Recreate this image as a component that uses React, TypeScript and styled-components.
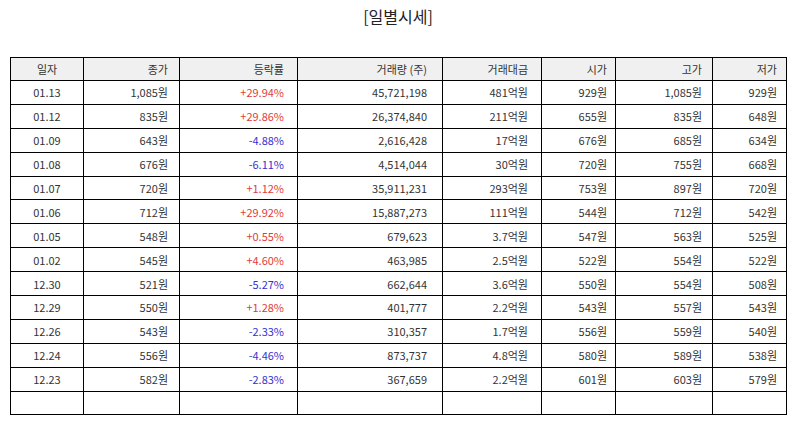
import React from 'react';
import styled, { createGlobalStyle } from 'styled-components';

const GlobalStyle = createGlobalStyle`
  html, body {
    margin: 0;
    padding: 0;
    background: #ffffff;
  }
  body {
    font-family: 'Noto Sans CJK KR', 'Noto Sans', sans-serif;
    color: #333333;
  }
`;

const Page = styled.div`
  width: 794px;
  height: 425px;
  padding: 5px 0 0 10px;
  box-sizing: border-box;
`;

const Title = styled.h2`
  margin: 0 0 29px 0;
  width: 776px;
  text-align: center;
  font-size: 16px;
  font-weight: 400;
  line-height: 23px;
  color: #222222;
`;

const Table = styled.table`
  width: 776px;
  border-collapse: collapse;
  table-layout: fixed;
  font-size: 11px;
`;

const HeadCell = styled.th<{ align: 'center' | 'right'; pad: number }>`
  height: 22px;
  padding: 0 ${(p) => p.pad}px 0 0;
  border: 1px solid #000000;
  background-color: #f0f0f0;
  font-weight: 400;
  text-align: ${(p) => p.align};
  color: #333333;
  ${(p) => (p.align === 'center' ? 'padding-right: 0;' : '')}
`;

const Cell = styled.td<{ align: 'center' | 'right'; pad: number; tone?: 'up' | 'down' }>`
  height: 22.9px;
  padding: 0 ${(p) => p.pad}px 0 0;
  border: 1px solid #000000;
  text-align: ${(p) => p.align};
  white-space: nowrap;
  color: ${(p) => (p.tone === 'up' ? '#e23b3b' : p.tone === 'down' ? '#3333cc' : '#333333')};
  ${(p) => (p.align === 'center' ? 'padding-right: 0;' : '')}
`;

interface Column {
  label: string;
  width: number;
  align: 'center' | 'right';
  pad: number;
}

const columns: Column[] = [
  { label: '일자', width: 73, align: 'center', pad: 0 },
  { label: '종가', width: 96, align: 'right', pad: 11 },
  { label: '등락률', width: 118, align: 'right', pad: 13 },
  { label: '거래량 (주)', width: 145, align: 'right', pad: 15 },
  { label: '거래대금', width: 99, align: 'right', pad: 13 },
  { label: '시가', width: 74, align: 'right', pad: 8 },
  { label: '고가', width: 97, align: 'right', pad: 10 },
  { label: '저가', width: 74, align: 'right', pad: 9 },
];

const rows: string[][] = [
  ['01.13', '1,085원', '+29.94%', '45,721,198', '481억원', '929원', '1,085원', '929원'],
  ['01.12', '835원', '+29.86%', '26,374,840', '211억원', '655원', '835원', '648원'],
  ['01.09', '643원', '-4.88%', '2,616,428', '17억원', '676원', '685원', '634원'],
  ['01.08', '676원', '-6.11%', '4,514,044', '30억원', '720원', '755원', '668원'],
  ['01.07', '720원', '+1.12%', '35,911,231', '293억원', '753원', '897원', '720원'],
  ['01.06', '712원', '+29.92%', '15,887,273', '111억원', '544원', '712원', '542원'],
  ['01.05', '548원', '+0.55%', '679,623', '3.7억원', '547원', '563원', '525원'],
  ['01.02', '545원', '+4.60%', '463,985', '2.5억원', '522원', '554원', '522원'],
  ['12.30', '521원', '-5.27%', '662,644', '3.6억원', '550원', '554원', '508원'],
  ['12.29', '550원', '+1.28%', '401,777', '2.2억원', '543원', '557원', '543원'],
  ['12.26', '543원', '-2.33%', '310,357', '1.7억원', '556원', '559원', '540원'],
  ['12.24', '556원', '-4.46%', '873,737', '4.8억원', '580원', '589원', '538원'],
  ['12.23', '582원', '-2.83%', '367,659', '2.2억원', '601원', '603원', '579원'],
];

const toneOf = (value: string, index: number) => {
  if (index !== 2) return undefined;
  return value.startsWith('+') ? 'up' : 'down';
};

const App: React.FC = () => {
  return (
    <>
      <GlobalStyle />
      <Page>
        <Title>[일별시세]</Title>
        <Table>
          <colgroup>
            {columns.map((col) => (
              <col key={col.label} style={{ width: col.width }} />
            ))}
          </colgroup>
          <thead>
            <tr>
              {columns.map((col) => (
                <HeadCell key={col.label} align={col.align} pad={col.pad}>
                  {col.label}
                </HeadCell>
              ))}
            </tr>
          </thead>
          <tbody>
            {rows.map((row) => (
              <tr key={row[0]}>
                {row.map((value, i) => (
                  <Cell key={i} align={columns[i].align} pad={columns[i].pad} tone={toneOf(value, i)}>
                    {value}
                  </Cell>
                ))}
              </tr>
            ))}
            <tr>
              {columns.map((col) => (
                <Cell key={col.label} align={col.align} pad={col.pad} />
              ))}
            </tr>
          </tbody>
        </Table>
      </Page>
    </>
  );
};

export default App;
